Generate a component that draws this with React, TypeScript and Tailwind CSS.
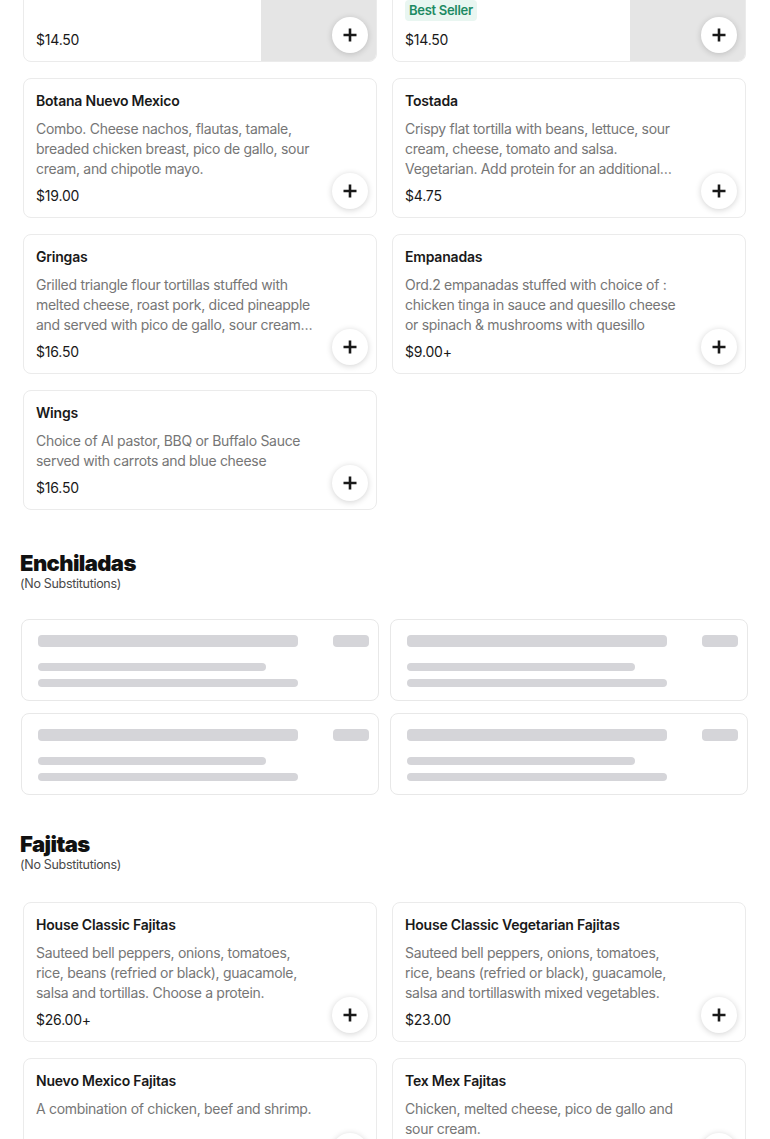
import { ReactNode } from 'react'

interface MenuItem {
  name: string
  desc: string
  price: string
  image?: boolean
  badge?: string
}

const appetizers: MenuItem[] = [
  { name: 'Queso Fundido', desc: 'Melted cheese with chorizo, served with warm flour tortillas.', price: '$14.50', image: true },
  { name: 'Guacamole Fresco', desc: 'Fresh avocado, onion, cilantro, tomato and lime with chips.', price: '$14.50', image: true, badge: 'Best Seller' },
  { name: 'Botana Nuevo Mexico', desc: 'Combo. Cheese nachos, flautas, tamale, breaded chicken breast, pico de gallo, sour cream, and chipotle mayo.', price: '$19.00' },
  { name: 'Tostada', desc: 'Crispy flat tortilla with beans, lettuce, sour cream, cheese, tomato and salsa. Vegetarian. Add protein for an additional charge.', price: '$4.75' },
  { name: 'Gringas', desc: 'Grilled triangle flour tortillas stuffed with melted cheese, roast pork, diced pineapple and served with pico de gallo, sour cream and guacamole.', price: '$16.50' },
  { name: 'Empanadas', desc: 'Ord.2 empanadas stuffed with choice of : chicken tinga in sauce and quesillo cheese or spinach & mushrooms with quesillo', price: '$9.00+' },
  { name: 'Wings', desc: 'Choice of Al pastor, BBQ or Buffalo Sauce served with carrots and blue cheese', price: '$16.50' },
]

const fajitas: MenuItem[] = [
  { name: 'House Classic Fajitas', desc: 'Sauteed bell peppers, onions, tomatoes, rice, beans (refried or black), guacamole, salsa and tortillas. Choose a protein.', price: '$26.00+' },
  { name: 'House Classic Vegetarian Fajitas', desc: 'Sauteed bell peppers, onions, tomatoes, rice, beans (refried or black), guacamole, salsa and tortillaswith mixed vegetables.', price: '$23.00' },
  { name: 'Nuevo Mexico Fajitas', desc: 'A combination of chicken, beef and shrimp.', price: '$29.00' },
  { name: 'Tex Mex Fajitas', desc: 'Chicken, melted cheese, pico de gallo and sour cream.', price: '$27.00' },
]

function PlusButton() {
  return (
    <button className="absolute right-2 bottom-2 w-9 h-9 rounded-full bg-white flex items-center justify-center shadow-[0_1px_6px_rgba(0,0,0,0.18)]">
      <svg width="14" height="14" viewBox="0 0 14 14" fill="none">
        <path d="M7 0.5v13M0.5 7h13" stroke="#191919" strokeWidth="2.6" />
      </svg>
    </button>
  )
}

function ItemCard({ item }: { item: MenuItem }) {
  return (
    <div className="relative flex rounded-lg border border-[#ebebeb] bg-white overflow-hidden">
      <div className="flex-1 min-w-0 flex flex-col pt-3 pb-[11px] pl-3">
        <div className="text-[14px] leading-5 font-semibold text-[#191919] tracking-[-0.2px]">{item.name}</div>
        <div className="mt-2 max-w-[280px] text-[14px] leading-5 text-[#767676] tracking-[-0.3px] line-clamp-3">{item.desc}</div>
        <div className="mt-auto pt-[7px]">
          {item.badge && (
            <div className="mb-[9px] inline-block rounded bg-[#e9f6f1] px-1 text-[13px] leading-[21px] font-semibold text-[#1d8a63] tracking-[-0.3px]">
              {item.badge}
            </div>
          )}
          <div className="text-[14px] leading-5 text-[#191919] tracking-[-0.2px]">{item.price}</div>
        </div>
      </div>
      {item.image && <div className="w-[115px] shrink-0 bg-[#e5e5e5]" />}
      <PlusButton />
    </div>
  )
}

function SectionHeader({ title, note }: { title: string; note: string }) {
  return (
    <div className="px-5">
      <h2 className="text-[22px] leading-[26px] font-black text-[#111] tracking-[-0.6px]">{title}</h2>
      <p className="text-[12.5px] leading-4 text-[#494949] tracking-[-0.3px]">{note}</p>
    </div>
  )
}

function SkeletonCard() {
  return (
    <div className="rounded-lg border border-[#e8e8e8] bg-white pl-4 pr-[9px] pt-[15px] pb-[13px] flex justify-between">
      <div>
        <div className="w-[260px] h-3 rounded bg-[#d5d5d9]" />
        <div className="mt-4 w-[228px] h-2 rounded-full bg-[#d5d5d9]" />
        <div className="mt-2 w-[260px] h-2 rounded-full bg-[#d5d5d9]" />
      </div>
      <div className="w-9 h-3 rounded bg-[#d5d5d9]" />
    </div>
  )
}

function Grid({ children }: { children: ReactNode }) {
  return <div className="grid grid-cols-2 gap-x-[15px] gap-y-4 pl-[23px] pr-6">{children}</div>
}

export default function App() {
  return (
    <div className="bg-white min-h-screen overflow-hidden" style={{ fontFamily: 'Inter, "Liberation Sans", sans-serif' }}>
      <div className="-mt-[78px] pb-10">
        <Grid>
          {appetizers.map((item) => (
            <div key={item.name} className={item.image ? 'h-[140px] flex flex-col [&>div]:flex-1' : 'flex flex-col [&>div]:flex-1'}>
              <ItemCard item={item} />
            </div>
          ))}
        </Grid>

        <div className="mt-[40px]">
          <SectionHeader title="Enchiladas" note="(No Substitutions)" />
        </div>
        <div className="mt-[27px] grid grid-cols-2 gap-x-[11px] gap-y-3 pl-[21px] pr-[22px]">
          <SkeletonCard />
          <SkeletonCard />
          <SkeletonCard />
          <SkeletonCard />
        </div>

        <div className="mt-[36px]">
          <SectionHeader title="Fajitas" note="(No Substitutions)" />
        </div>
        <div className="mt-[29px]">
          <Grid>
            {fajitas.map((item) => (
              <div key={item.name} className="flex flex-col [&>div]:flex-1">
                <ItemCard item={item} />
              </div>
            ))}
          </Grid>
        </div>
      </div>
    </div>
  )
}
